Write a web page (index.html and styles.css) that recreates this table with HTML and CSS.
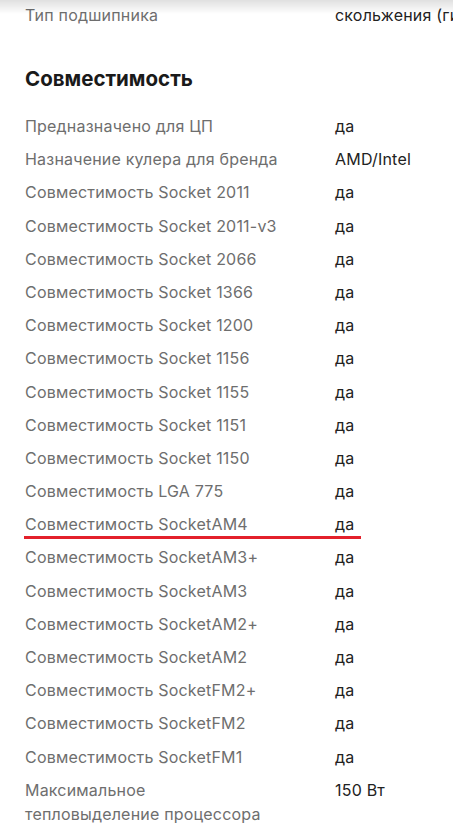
FILE: index.html
```html
<!DOCTYPE html>
<html lang="ru">
<head>
<meta charset="utf-8">
<link rel="stylesheet" href="styles.css">
</head>
<body>
<div class="shade"></div>
<div class="page">
  <div class="specs">
    <div class="row"><div class="label">Тип подшипника</div><div class="value clip">скольжения (гидродинамический)</div></div>
  </div>
  <h2 class="title">Совместимость</h2>
  <div class="specs">
    <div class="row"><div class="label">Предназначено для ЦП</div><div class="value">да</div></div>
    <div class="row"><div class="label">Назначение кулера для бренда</div><div class="value">AMD/Intel</div></div>
    <div class="row"><div class="label">Совместимость Socket 2011</div><div class="value">да</div></div>
    <div class="row"><div class="label">Совместимость Socket 2011-v3</div><div class="value">да</div></div>
    <div class="row"><div class="label">Совместимость Socket 2066</div><div class="value">да</div></div>
    <div class="row"><div class="label">Совместимость Socket 1366</div><div class="value">да</div></div>
    <div class="row"><div class="label">Совместимость Socket 1200</div><div class="value">да</div></div>
    <div class="row"><div class="label">Совместимость Socket 1156</div><div class="value">да</div></div>
    <div class="row"><div class="label">Совместимость Socket 1155</div><div class="value">да</div></div>
    <div class="row"><div class="label">Совместимость Socket 1151</div><div class="value">да</div></div>
    <div class="row"><div class="label">Совместимость Socket 1150</div><div class="value">да</div></div>
    <div class="row"><div class="label">Совместимость LGA 775</div><div class="value">да</div></div>
    <div class="row marked"><div class="label">Совместимость SocketAM4</div><div class="value">да</div></div>
    <div class="row"><div class="label">Совместимость SocketAM3+</div><div class="value">да</div></div>
    <div class="row"><div class="label">Совместимость SocketAM3</div><div class="value">да</div></div>
    <div class="row"><div class="label">Совместимость SocketAM2+</div><div class="value">да</div></div>
    <div class="row"><div class="label">Совместимость SocketAM2</div><div class="value">да</div></div>
    <div class="row"><div class="label">Совместимость SocketFM2+</div><div class="value">да</div></div>
    <div class="row"><div class="label">Совместимость SocketFM2</div><div class="value">да</div></div>
    <div class="row"><div class="label">Совместимость SocketFM1</div><div class="value">да</div></div>
    <div class="row"><div class="label">Максимальное тепловыделение процессора</div><div class="value">150 Вт</div></div>
  </div>
</div>
</body>
</html>
```
FILE: styles.css
```css
html, body {
  margin: 0;
  padding: 0;
  background: #fff;
  overflow: hidden;
}
body {
  font-family: Inter, "Noto Sans", sans-serif;
  font-size: 16px;
  letter-spacing: 0.2px;
  color: #222;
}
.shade {
  position: fixed;
  top: 0;
  left: 0;
  right: 0;
  height: 14px;
  background: linear-gradient(to bottom, rgba(0,0,0,0.12), rgba(0,0,0,0));
  z-index: 2;
}
.page {
  padding: 3px 0 0 25px;
  width: 560px;
  box-sizing: border-box;
}
.specs {
  display: flex;
  flex-direction: column;
  gap: 9.2px;
}
.row {
  display: grid;
  grid-template-columns: 255px 1fr;
  column-gap: 55px;
  line-height: 24px;
}
.label {
  color: #6e6e6e;
}
.value {
  color: #222;
}
.clip {
  white-space: nowrap;
}
.title {
  margin: 37px 0 20px;
  font-size: 20.5px;
  line-height: 30px;
  font-weight: 700;
  letter-spacing: 0;
  color: #1a1a1a;
}
.marked {
  width: 336px;
  border-bottom: 3px solid #e3202b;
  margin-left: -1px;
  padding-left: 1px;
  margin-bottom: -3px;
}
```
